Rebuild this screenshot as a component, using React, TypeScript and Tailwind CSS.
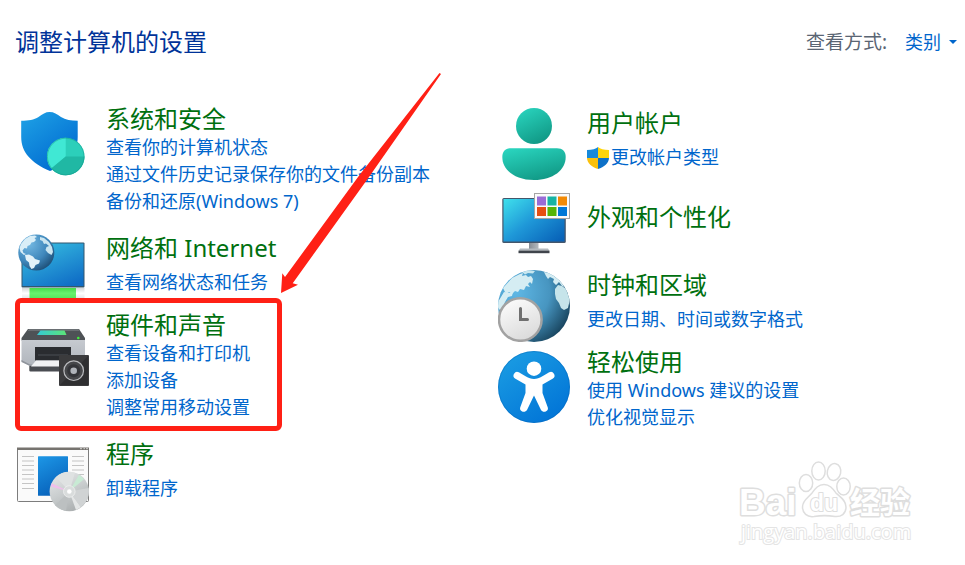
import type { ReactNode } from "react";

function Icon({ children }: { children: ReactNode }) {
  return (
    <svg viewBox="0 0 72 72" className="block size-[72px]" aria-hidden="true">
      {children}
    </svg>
  );
}

function SecurityIcon() {
  return (
    <Icon>
      <defs>
        <linearGradient id="shield" x1="0" y1="0" x2="0.7" y2="1">
          <stop offset="0" stopColor="#1fa3e6" />
          <stop offset="1" stopColor="#0069d0" />
        </linearGradient>
      </defs>
      <path
        d="M32.500 4C37 4 40 6 44 9C48.500 12 54 12.700 60.700 12.700V29C60.700 45 50 57 33 63C14.500 55 4.200 44.500 4.200 29V12.700C11.500 12.700 17 12 21.500 9C25.500 6 28.500 4 32.500 4Z"
        fill="url(#shield)"
      />
      <circle cx="48.700" cy="48.500" r="18.800" fill="#2ccfba" />
      <path d="M48.700 48.500V29.700A18.800 18.800 0 0 0 34.300 60.600Z" fill="#40e8d4" />
      <path d="M48.700 48.500H67.500A18.800 18.800 0 0 1 34.300 60.600Z" fill="#20b8a4" />
      <circle cx="48.700" cy="48.500" r="18.300" fill="none" stroke="#159c8c" strokeOpacity="0.5" />
    </Icon>
  );
}

function NetworkIcon() {
  return (
    <Icon>
      <defs>
        <linearGradient id="netScreen" x1="0.2" y1="0" x2="0.8" y2="1">
          <stop offset="0" stopColor="#35bde0" />
          <stop offset="0.5" stopColor="#2394d3" />
          <stop offset="1" stopColor="#0f6dc6" />
        </linearGradient>
        <radialGradient id="netGlobe" cx="0.3" cy="0.25" r="0.85">
          <stop offset="0" stopColor="#74b9e3" />
          <stop offset="0.6" stopColor="#3f87bb" />
          <stop offset="1" stopColor="#1b4a72" />
        </radialGradient>
        <linearGradient id="cable" x1="0" y1="0" x2="0" y2="1">
          <stop offset="0" stopColor="#46d94b" />
          <stop offset="0.5" stopColor="#69f06d" />
          <stop offset="1" stopColor="#58e45c" />
        </linearGradient>
        <linearGradient id="plug" x1="0" y1="0" x2="0" y2="1">
          <stop offset="0" stopColor="#d5d8da" />
          <stop offset="0.5" stopColor="#ffffff" />
          <stop offset="1" stopColor="#e2e4e6" />
        </linearGradient>
      </defs>
      <rect x="4.500" y="9.500" width="63" height="45" rx="1" fill="#32566e" />
      <rect x="5.500" y="10.500" width="61" height="42.500" fill="url(#netScreen)" />
      <rect x="5" y="55" width="62.500" height="10.500" fill="url(#plug)" />
      <rect x="12.500" y="55" width="46.500" height="10.500" fill="url(#cable)" />
      <circle cx="19.300" cy="19.500" r="18" fill="url(#netGlobe)" />
      <path
        d="M4 11L8 6L13 3L18 2.500L20 4L17.500 5L19 7L17 9L14.500 9.500L13 12L10.500 13L10 15.500L7.500 15L5.500 17.500L6.500 20L9 21L7 22L3.500 19L2.500 15Z"
        fill="#d9eef7"
      />
      <path d="M8 22L12 21.500L16 23.500L18 26L23 27.500L22 30.500L18.500 32L17 35L14.500 36L12.500 33L12 29.500L9 27Z" fill="#e3f2f8" />
      <path d="M23 4L27 5L32 9L35 14L36 19L34.500 22L31 20L28.500 17L29.500 14L32 13L29 10.500L27 11L25.500 8L23 7Z" fill="#cae5f0" />
    </Icon>
  );
}

function PrinterIcon() {
  return (
    <Icon>
      <defs>
        <linearGradient id="printerBody" x1="0" y1="0" x2="0" y2="1">
          <stop offset="0" stopColor="#c6cad0" />
          <stop offset="1" stopColor="#b0b5bc" />
        </linearGradient>
        <linearGradient id="panel" x1="0" y1="0" x2="1" y2="0">
          <stop offset="0" stopColor="#35c9d5" />
          <stop offset="1" stopColor="#5ce577" />
        </linearGradient>
      </defs>
      <path d="M11 11H62L68 20V22.500H4.500V20Z" fill="#4e5256" />
      <path d="M12 11H61.500L63 13H10.500Z" fill="#6a6f73" />
      <path d="M23.500 12.500H47.500L49.500 17H20Z" fill="url(#panel)" />
      <circle cx="61.300" cy="20" r="1.300" fill="#40f13c" />
      <path d="M4.500 22H68V46H43V48H13L4.500 43.500Z" fill="url(#printerBody)" />
      <path d="M4.500 42L13 46.500H15L14 48H13L4.500 44Z" fill="#8f949b" />
      <path d="M18 29H54V42.500H18Z" fill="#2a2c30" />
      <path d="M21 36H51V38H21Z" fill="#3a3d42" />
      <path d="M12.300 48H43V53.500H13.500Q12.300 53.500 12.300 52.500Z" fill="#4a4d52" />
      <path d="M19 42.500H43V48.500H14Z" fill="#f1f2f4" />
      <rect x="42" y="37" width="30" height="31" rx="1" fill="#3b3b3d" />
      <path d="M43 67L71 38V67Z" fill="#2f2f31" />
      <circle cx="56.700" cy="52.700" r="9.800" fill="#46474a" stroke="#b9babd" strokeWidth="1.200" />
      <circle cx="56.700" cy="52.700" r="6.500" fill="#343539" />
      <circle cx="56.700" cy="52.700" r="3.300" fill="#b0b4ba" />
    </Icon>
  );
}

const lineRows = [13.5, 18, 22.5, 27, 31.5, 36, 40.5, 45.5];

function ProgramsIcon() {
  return (
    <Icon>
      <defs>
        <linearGradient id="progBlue" x1="0" y1="0" x2="0.4" y2="1">
          <stop offset="0" stopColor="#1d97e6" />
          <stop offset="1" stopColor="#0863bc" />
        </linearGradient>
        <linearGradient id="disc" x1="0.2" y1="0" x2="0.7" y2="1">
          <stop offset="0" stopColor="#e5e7e8" />
          <stop offset="0.5" stopColor="#c9cdce" />
          <stop offset="1" stopColor="#a9adae" />
        </linearGradient>
      </defs>
      <rect x="0.500" y="5.500" width="71" height="53" rx="1" fill="#fafafa" stroke="#7d7d7d" />
      <rect x="0" y="4.500" width="72" height="2.500" fill="#76736f" />
      <path d="M63 5.700H65M66.500 5.700H68M69 5.700H71" stroke="#e8e8e8" strokeWidth="0.800" />
      {lineRows.map((y) => (
        <path key={y} d={`M5 ${y}H17M55 ${y}H67`} stroke="#c4c4c4" />
      ))}
      <rect x="21" y="13.300" width="30" height="39.500" rx="0.500" fill="url(#progBlue)" />
      <circle cx="52.300" cy="48.500" r="19.700" fill="url(#disc)" />
      <path d="M52.300 48.500L39 34A19.700 19.700 0 0 1 58 29.700Z" fill="#dfe2e2" />
      <path d="M52.300 48.500L62 31.700A19.700 19.700 0 0 1 67 36.200Z" fill="#c8ead4" />
      <path d="M52.300 48.500L33.500 43.500L34.800 40.200Z" fill="#efbfea" />
      <path d="M52.300 48.500L71.500 45A19.700 19.700 0 0 1 64 64.200Z" fill="#d0d3d4" />
      <path d="M52.300 48.500L64 64.200L59 67Z" fill="#e4e6e6" />
      <path d="M52.300 48.500L38 62.200A19.700 19.700 0 0 0 49 67.900Z" fill="#bcc0c1" />
      <circle cx="52.300" cy="48.500" r="5.800" fill="#d9dcdc" stroke="#eff0f0" strokeWidth="0.800" />
      <circle cx="52.300" cy="48.500" r="2.300" fill="#ffffff" />
    </Icon>
  );
}

function UserIcon() {
  return (
    <Icon>
      <defs>
        <linearGradient id="userHead" x1="0.2" y1="0" x2="0.7" y2="1">
          <stop offset="0" stopColor="#29d3bd" />
          <stop offset="1" stopColor="#109784" />
        </linearGradient>
      </defs>
      <circle cx="36" cy="18" r="18" fill="url(#userHead)" />
      <path
        d="M13 40.300H59C64.500 40.300 67.700 43.500 67.700 49C67.700 62 55 72 36 72C17 72 4.300 62 4.300 49C4.300 43.500 7.500 40.300 13 40.300Z"
        fill="url(#userHead)"
      />
    </Icon>
  );
}

function AppearanceIcon() {
  return (
    <Icon>
      <defs>
        <linearGradient id="deskScreen" x1="0" y1="0" x2="1" y2="0.900">
          <stop offset="0" stopColor="#3fe0ec" />
          <stop offset="0.500" stopColor="#1f98d8" />
          <stop offset="1" stopColor="#0862b8" />
        </linearGradient>
        <linearGradient id="stand" x1="0" y1="0" x2="1" y2="0">
          <stop offset="0" stopColor="#878d94" />
          <stop offset="1" stopColor="#b5babf" />
        </linearGradient>
      </defs>
      <rect x="31" y="54" width="9.500" height="8" fill="url(#stand)" />
      <path d="M22 60.500H50L51.500 63H20.500Z" fill="#b4b9be" />
      <rect x="20.500" y="62.700" width="31" height="2.500" fill="#3f444b" />
      <rect x="4.300" y="10" width="63.500" height="45" rx="1.500" fill="#44566b" />
      <rect x="5.500" y="11" width="61" height="42.500" fill="url(#deskScreen)" />
      <rect x="36.500" y="5.500" width="35" height="25" fill="#fafafa" stroke="#a5a5a5" />
      <rect x="39" y="8.500" width="9" height="9" fill="#9a6cd6" />
      <rect x="49.500" y="8.500" width="9" height="9" fill="#17b3a3" />
      <rect x="60" y="8.500" width="9" height="9" fill="#f28a05" />
      <rect x="39" y="19" width="9" height="9" fill="#e64f12" />
      <rect x="49.500" y="19" width="9" height="9" fill="#55b407" />
      <rect x="60" y="19" width="9" height="9" fill="#0078d7" />
    </Icon>
  );
}

function ClockIcon() {
  return (
    <Icon>
      <defs>
        <radialGradient id="globe" cx="0.25" cy="0.3" r="0.85">
          <stop offset="0" stopColor="#5fb8e6" />
          <stop offset="0.550" stopColor="#4795c0" />
          <stop offset="1" stopColor="#153f58" />
        </radialGradient>
        <linearGradient id="face" x1="0" y1="0" x2="0.500" y2="1">
          <stop offset="0" stopColor="#ffffff" />
          <stop offset="1" stopColor="#dcdcdc" />
        </linearGradient>
        <clipPath id="globeClip">
          <circle cx="36" cy="36" r="36" />
        </clipPath>
      </defs>
      <circle cx="36" cy="36" r="36" fill="url(#globe)" />
      <g clipPath="url(#globeClip)">
        <path
          d="M5 18L14 8L22 4L25 3L24 6L28 5L30 7L33 6L35 9L34 14L32 12L30 14L32 17L28 16L26 20L22 19L20 22L17 21L14 24L11 22L8 24Z"
          fill="#d5edf3"
        />
        <path d="M6 22L12 23L15 22L14 26L10 27L7 32L5 37L2 40L0 38L0 32Z" fill="#d5edf3" />
        <path d="M24 2L30 0L37 1L35 3.500L30 3L27 4.500Z" fill="#c8e7ef" />
        <path d="M46 2L52 3L60 8L67 17L64 16L61 12L58 15L55 12L56 9L52 7L50 9L48 6Z" fill="#d5edf3" />
        <path d="M57 19L60 15L64 16L68 19L72 29L70 38L66 40L63 38L61 33L58 29L57 24Z" fill="#c6e4ea" />
      </g>
      <circle cx="22.300" cy="49.500" r="21.300" fill="url(#face)" stroke="#a2a2a2" strokeWidth="2.500" />
      <path d="M22.500 38.500V49.500H29.500" fill="none" stroke="#707070" strokeWidth="3" strokeLinecap="round" />
    </Icon>
  );
}

function AccessIcon() {
  return (
    <Icon>
      <defs>
        <linearGradient id="access" x1="0.150" y1="0" x2="0.850" y2="1">
          <stop offset="0" stopColor="#1b9de3" />
          <stop offset="1" stopColor="#0072d6" />
        </linearGradient>
      </defs>
      <circle cx="36" cy="36" r="36" fill="url(#access)" />
      <circle cx="36" cy="36" r="35.500" fill="none" stroke="#0563b4" strokeOpacity="0.400" />
      <circle cx="36" cy="17.700" r="7.300" fill="#ffffff" />
      <path
        d="M20.800 21.200L28 25.500C33 28.800 39 28.800 44 25.500L51.200 21.200A3.700 3.700 0 0 1 55 27.500L44.500 33.500V42L49.800 56.500C51 60.500 45 62.500 43 59L36 44.500L29 59C27 62.500 21 60.500 22.200 56.500L27.500 42V33.500L17 27.500A3.700 3.700 0 0 1 20.800 21.200Z"
        fill="#ffffff"
      />
    </Icon>
  );
}

function AdminShield() {
  return (
    <svg viewBox="0 0 22 22" className="size-[22px] shrink-0" aria-hidden="true">
      <defs>
        <clipPath id="adminClip">
          <path d="M11 0C13 2 17 3 22 3V11C22 16 17 20 11 22C5 20 0 16 0 11V3C5 3 9 2 11 0Z" />
        </clipPath>
      </defs>
      <g clipPath="url(#adminClip)">
        <rect width="11" height="11" fill="#1789da" />
        <rect x="11" width="11" height="11" fill="#ffd50a" />
        <rect y="11" width="11" height="11" fill="#fbc10c" />
        <rect x="11" y="11" width="11" height="11" fill="#0d71c8" />
      </g>
    </svg>
  );
}

type Category = {
  title: string;
  links: string[];
  icon: ReactNode;
  row: string;
  iconPad?: string;
  textPad?: string;
  admin?: boolean;
  marked?: boolean;
};

const left: Category[] = [
  {
    title: "系统和安全",
    links: ["查看你的计算机状态", "通过文件历史记录保存你的文件备份副本", "备份和还原(Windows 7)"],
    icon: <SecurityIcon />,
    row: "mb-[18px]",
    iconPad: "pt-1",
  },
  { title: "网络和 Internet", links: ["查看网络状态和任务"], icon: <NetworkIcon />, row: "mb-[5px]" },
  {
    title: "硬件和声音",
    links: ["查看设备和打印机", "添加设备", "调整常用移动设置"],
    icon: <PrinterIcon />,
    row: "mb-[18px]",
    iconPad: "pt-2",
    marked: true,
  },
  { title: "程序", links: ["卸载程序"], icon: <ProgramsIcon />, row: "", iconPad: "pt-1" },
];

const right: Category[] = [
  { title: "用户帐户", links: ["更改帐户类型"], icon: <UserIcon />, row: "mb-2", admin: true },
  { title: "外观和个性化", links: [], icon: <AppearanceIcon />, row: "mb-2.5", textPad: "pt-3.5" },
  { title: "时钟和区域", links: ["更改日期、时间或数字格式"], icon: <ClockIcon />, row: "mb-[5px]" },
  {
    title: "轻松使用",
    links: ["使用 Windows 建议的设置", "优化视觉显示"],
    icon: <AccessIcon />,
    row: "",
    iconPad: "pt-1",
  },
];

function CategoryRow({ item }: { item: Category }) {
  return (
    <section className={`relative flex gap-[17px] ${item.row}`}>
      <div className={`shrink-0 ${item.iconPad ?? ""}`}>{item.icon}</div>
      <div className={item.textPad ?? ""}>
        <h2 className="text-[24px] leading-[30px] whitespace-nowrap text-[#00700f]">
          <a href="#">{item.title}</a>
        </h2>
        <ul className={item.links.length === 1 ? "pt-1.5" : ""}>
          {item.links.map((link) => (
            <li key={link} className="text-[18px] leading-[27px] whitespace-nowrap text-[#0066cc]">
              <a href="#" className="inline-flex items-center gap-0.5 align-top">
                {item.admin && <AdminShield />}
                {link}
              </a>
            </li>
          ))}
        </ul>
      </div>
      {item.marked && (
        <div className="pointer-events-none absolute -top-3 -bottom-2.5 -left-0.5 w-[267px] rounded-[6px] border-5 border-[#ff2015]" />
      )}
    </section>
  );
}

function Watermark() {
  return (
    <div className="pointer-events-none absolute top-[458px] right-[45px] w-[182px]">
      <svg viewBox="0 0 182 60" className="block h-[60px] w-[182px] overflow-visible">
        <g fill="#ffffff" stroke="#dedede" strokeWidth="1.500" strokeLinejoin="round">
          <g strokeWidth="3" paintOrder="stroke" className="font-['Liberation_Sans',sans-serif] font-bold">
            <text x="1" y="57" fontSize="37">
              Bai
            </text>
            <text x="112" y="55" fontSize="30" className="font-['Noto_Sans_CJK_SC',sans-serif]">
              经验
            </text>
          </g>
          <ellipse cx="68" cy="25" rx="6.700" ry="8.500" />
          <ellipse cx="80.500" cy="13" rx="6.700" ry="9" />
          <ellipse cx="96" cy="14" rx="6.700" ry="8.500" transform="rotate(12 96 14)" />
          <ellipse cx="105.500" cy="28.500" rx="6.700" ry="8.500" />
          <path d="M86 26.500C92 26.500 95 31 98 35C102 39 108 42 108 49C108 56 103 59 97 58.500C91 57.500 82 57.500 76 58.500C69 59.500 64.500 55 64.500 49C64.500 42 70 40 74 35C77 31 80 26.500 86 26.500Z" />
          <text
            x="72"
            y="53"
            fontSize="23"
            strokeWidth="2"
            paintOrder="stroke"
            className="font-['Liberation_Sans',sans-serif] font-bold"
          >
            du
          </text>
        </g>
      </svg>
      <p className="pl-[3px] font-['Open_Sans',sans-serif] text-[20px] leading-7 text-white [paint-order:stroke] [-webkit-text-stroke:2px_#e4e4e4]">
        jingyan.baidu.com
      </p>
    </div>
  );
}

export default function App() {
  return (
    <main className="relative min-h-screen bg-white font-['Noto_Sans','Noto_Sans_CJK_SC',sans-serif]">
      <header className="flex items-center justify-between pt-6 pr-2 pl-[15px]">
        <h1 className="text-[24px] leading-9 text-[#003399]">调整计算机的设置</h1>
        <div className="flex items-center gap-[18px]">
          <label htmlFor="view" className="text-[19px] leading-9 text-[#5a6573]">
            查看方式:
          </label>
          <div className="relative">
            <select
              id="view"
              className="block w-[52px] appearance-none bg-transparent text-[18px] leading-9 text-[#0066cc]"
            >
              <option>类别</option>
            </select>
            <svg viewBox="0 0 8 4" className="pointer-events-none absolute top-4 right-0 h-1 w-2" aria-hidden="true">
              <path d="M0 0H8L4 4Z" fill="#0066cc" />
            </svg>
          </div>
        </div>
      </header>

      <div className="grid grid-cols-[481fr_467fr] pt-11 pl-[17px]">
        <div>
          {left.map((item) => (
            <CategoryRow key={item.title} item={item} />
          ))}
        </div>
        <div className="pt-1">
          {right.map((item) => (
            <CategoryRow key={item.title} item={item} />
          ))}
        </div>
      </div>

      <svg
        viewBox="0 0 162 222"
        className="pointer-events-none absolute top-[72px] left-[280px] h-[222px] w-[162px]"
        aria-hidden="true"
      >
        <path d="M159.500 1L161 2L89 105L12.700 211.300L18 212.700L1 221L2.300 201.300L5 205L79.500 103Z" fill="#ff2015" />
      </svg>
      <Watermark />
    </main>
  );
}
